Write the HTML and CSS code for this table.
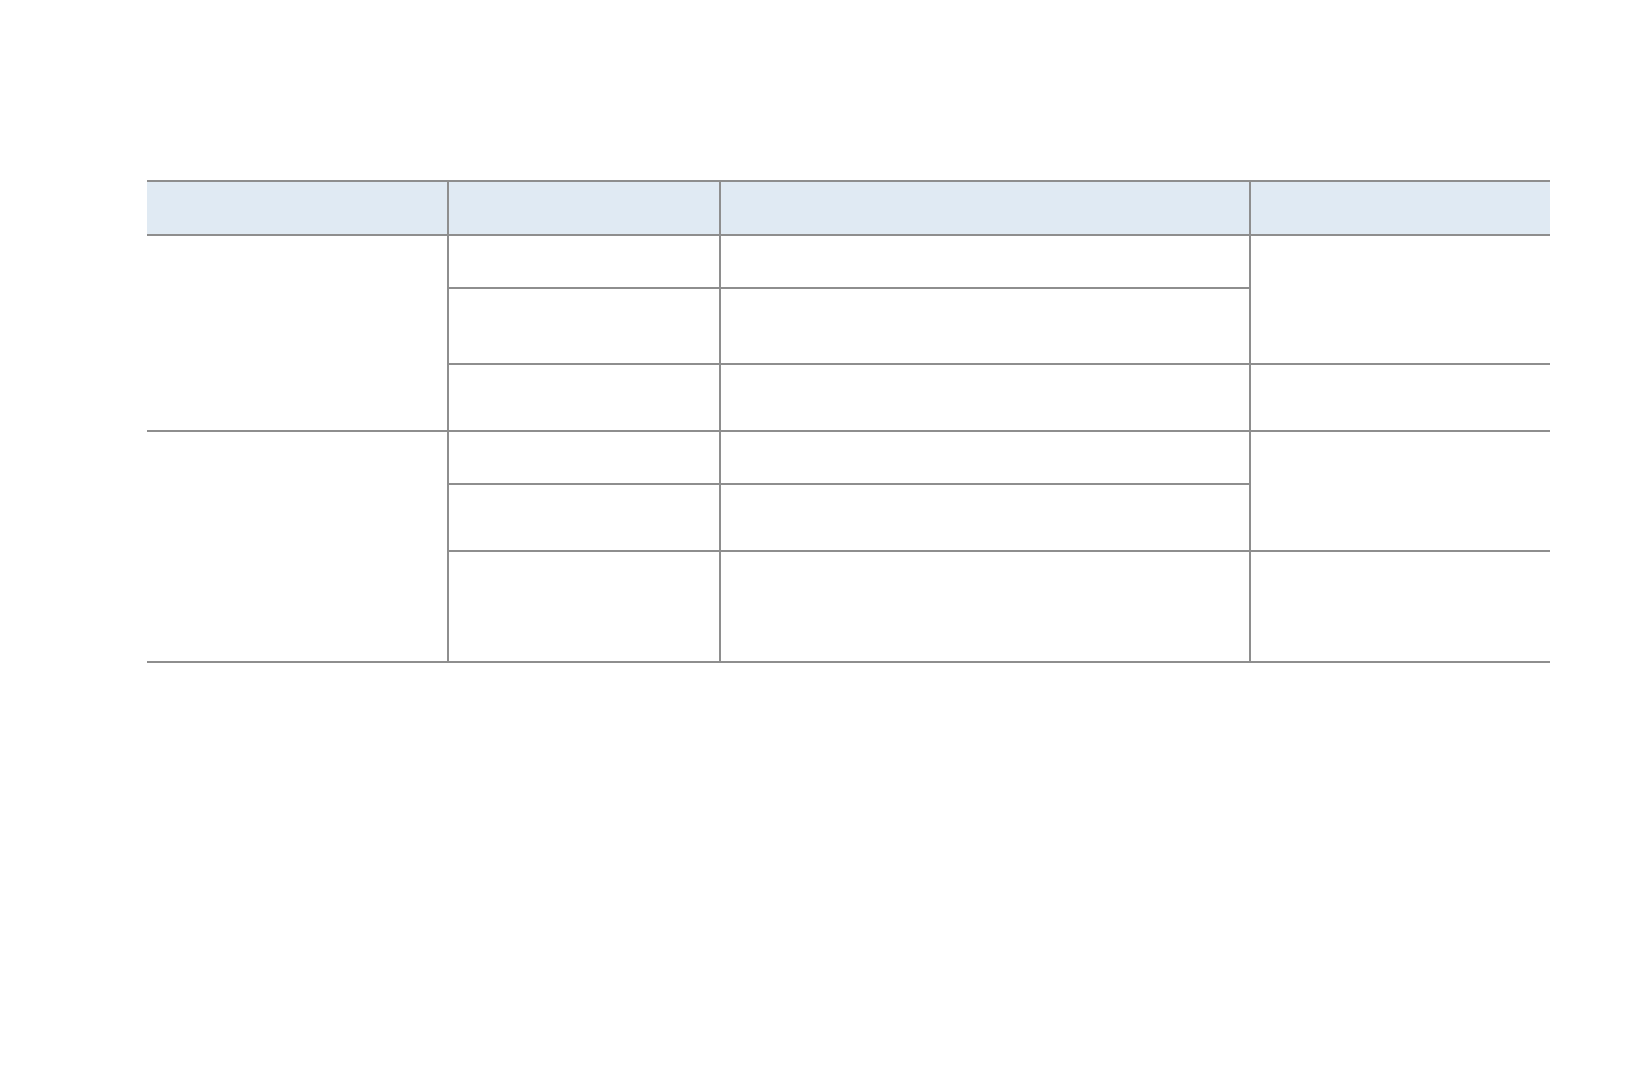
FILE: index.html
```html
<!DOCTYPE html>
<html>
<head>
<meta charset="utf-8">
<link rel="stylesheet" href="styles.css">
</head>
<body>
<div class="page">
  <div class="grid">
    <div class="cell head c1"></div>
    <div class="cell head c2 bl"></div>
    <div class="cell head c3 bl"></div>
    <div class="cell head c4 bl"></div>

    <div class="cell g1a"></div>
    <div class="cell bl r2 c2"></div>
    <div class="cell bl r2 c3"></div>
    <div class="cell bl g1d"></div>
    <div class="cell bl r3 c2"></div>
    <div class="cell bl r3 c3"></div>
    <div class="cell bl r4 c2"></div>
    <div class="cell bl r4 c3"></div>
    <div class="cell bl r4 c4"></div>

    <div class="cell g2a"></div>
    <div class="cell bl r5 c2"></div>
    <div class="cell bl r5 c3"></div>
    <div class="cell bl g2d"></div>
    <div class="cell bl r6 c2"></div>
    <div class="cell bl r6 c3"></div>
    <div class="cell bl r7 c2"></div>
    <div class="cell bl r7 c3"></div>
    <div class="cell bl r7 c4"></div>
  </div>
</div>
</body>
</html>
```

FILE: styles.css
```css
html, body {
  margin: 0;
  padding: 0;
  background: #ffffff;
  font-family: "Liberation Sans", Arial, sans-serif;
}
.page {
  padding: 180px 0 0 147px;
}
.grid {
  display: grid;
  width: 1403px;
  grid-template-columns: 300px 272px 530px 301px;
  grid-template-rows: 54px 53px 76px 67px 53px 67px 111px;
  border-bottom: 2px solid #8e8e8e;
}
.cell {
  box-sizing: border-box;
  border-top: 2px solid #8e8e8e;
}
.bl {
  border-left: 2px solid #8e8e8e;
}
.head {
  background: #e0eaf3;
  grid-row: 1;
}
.c1 { grid-column: 1; }
.c2 { grid-column: 2; }
.c3 { grid-column: 3; }
.c4 { grid-column: 4; }
.r2 { grid-row: 2; }
.r3 { grid-row: 3; }
.r4 { grid-row: 4; }
.r5 { grid-row: 5; }
.r6 { grid-row: 6; }
.r7 { grid-row: 7; }
.g1a { grid-column: 1; grid-row: 2 / 5; }
.g1d { grid-column: 4; grid-row: 2 / 4; }
.g2a { grid-column: 1; grid-row: 5 / 8; }
.g2d { grid-column: 4; grid-row: 5 / 7; }
```
